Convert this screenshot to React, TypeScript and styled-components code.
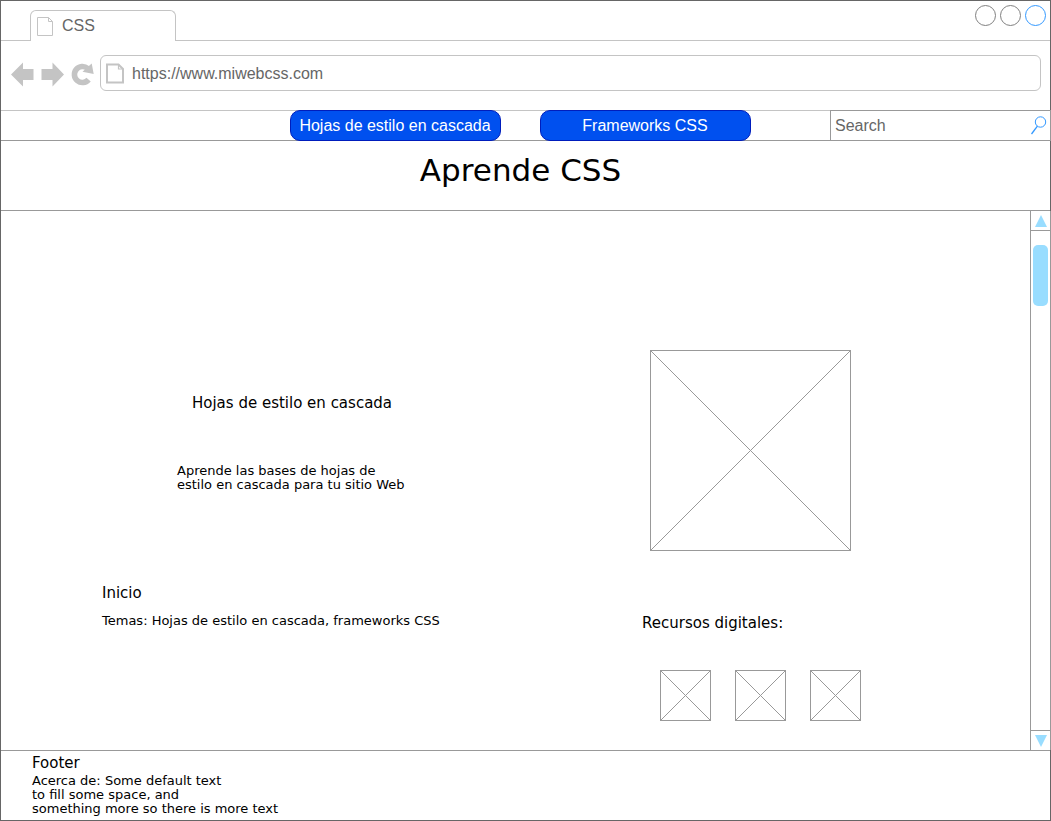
import React from "react";
import styled, { createGlobalStyle } from "styled-components";

const line = "#999";
const chromeLine = "#c4c4c4";
const sky = "#99ddff";
const blue = "#3399ff";

const GlobalStyle = createGlobalStyle`
  *, *::before, *::after { box-sizing: border-box; }
  body {
    margin: 0;
    background: #fff;
    color: #000;
    font-family: Verdana, "DejaVu Sans", sans-serif;
  }
  button, input { font: inherit; }
  h1, h2, p { margin: 0; font-weight: normal; }
  svg { display: block; flex: none; }
`;

const Window = styled.div`
  display: flex;
  flex-direction: column;
  min-height: 100vh;
  border: 1px solid #666;
`;

const Chrome = styled.div`
  font-family: Arial, "Liberation Sans", sans-serif;
  font-size: 16px;
  line-height: 20px;
  color: #666;
`;

const TabStrip = styled.div`
  display: flex;
  align-items: flex-end;
  justify-content: space-between;
  height: 40px;
  padding: 0 4px 0 29px;
  border-bottom: 1px solid ${chromeLine};
`;

const Tab = styled.div`
  display: flex;
  align-items: center;
  gap: 8px;
  width: 146px;
  height: 31px;
  margin-bottom: -1px;
  padding-left: 6px;
  border: 1px solid ${chromeLine};
  border-bottom: 0;
  border-radius: 6px 6px 0 0;
  background: #fff;
`;

const WindowControls = styled.div`
  display: flex;
  align-self: flex-start;
  gap: 4px;
  padding-top: 4px;
`;

const Dot = styled.button<{ $color: string }>`
  width: 21px;
  height: 21px;
  padding: 0;
  border: 1px solid ${(p) => p.$color};
  border-radius: 50%;
  background: #fff;
`;

const Toolbar = styled.div`
  display: flex;
  align-items: center;
  height: 69px;
  padding: 0 9px 5px;
  gap: 6px;
`;

const ToolButton = styled.button`
  padding: 0;
  border: 0;
  background: none;
`;

const ToolGroup = styled.div`
  display: flex;
  gap: 7px;
  padding: 2px 0 0 1px;
`;

const AddressBar = styled.label`
  display: flex;
  flex: 1;
  align-items: center;
  gap: 8px;
  height: 36px;
  padding: 1px 6px 0 5px;
  border: 1px solid ${chromeLine};
  border-radius: 6px;
`;

const TextInput = styled.input`
  flex: 1;
  min-width: 0;
  padding: 0;
  border: 0;
  outline: 0;
  background: none;
  color: #666;
  &::placeholder { color: #666; opacity: 1; }
`;

const NavBar = styled.div`
  display: flex;
  justify-content: space-between;
  height: 31px;
  border-top: 1px solid ${chromeLine};
  border-bottom: 1px solid ${line};
`;

const NavLinks = styled.nav`
  display: flex;
  gap: 39px;
  margin: -1px 0 -1px calc(50% - 236px);
`;

const NavButton = styled.button`
  width: 211px;
  padding: 0;
  border: 1px solid #001dbc;
  border-radius: 10px;
  background: #0050ef;
  color: #fff;
  white-space: nowrap;
`;

const SearchBox = styled.label`
  display: flex;
  align-items: center;
  width: 221px;
  margin: -1px -1px -1px 0;
  padding: 0 3px 0 4px;
  border: 1px solid ${line};
`;

const Header = styled.header`
  height: 70px;
  padding: 10px 10px 0 0;
  border-bottom: 1px solid ${line};
  text-align: center;
`;

const Title = styled.h1`
  font-size: 31px;
  line-height: 38px;
`;

const Body = styled.div`
  display: flex;
  flex: 1;
  border-bottom: 1px solid ${line};
`;

const Content = styled.main`
  display: grid;
  grid-template-columns: 1fr 388px;
  align-items: start;
  flex: 1;
`;

const Column = styled.div<{ $top: number; $left: number }>`
  padding: ${(p) => p.$top}px 0 16px ${(p) => p.$left}px;
`;

const Intro = styled.section`
  padding-left: 75px;
`;

const Heading = styled.h2<{ $indent?: number }>`
  padding-left: ${(p) => p.$indent ?? 0}px;
  font-size: 15px;
  line-height: 18px;
`;

const Text = styled.p<{ $gap: number }>`
  margin-top: ${(p) => p.$gap}px;
  font-size: 13px;
  line-height: 14px;
`;

const Topics = styled.section`
  margin-top: 92px;
`;

const Resources = styled.section`
  margin-top: 63px;
`;

const Thumbs = styled.div`
  display: flex;
  gap: 24px;
  margin-top: 38px;
  padding-left: 18px;
`;

const Hero = styled.div`
  padding-left: 8px;
`;

const ScrollTrack = styled.div`
  display: flex;
  flex-direction: column;
  width: 21px;
  margin-right: -1px;
  border: solid ${line};
  border-width: 0 1px;
`;

const ScrollButton = styled.button<{ $down?: boolean }>`
  display: grid;
  place-items: center;
  height: 20px;
  padding: 0;
  border: solid ${line};
  border-width: ${(p) => (p.$down ? "1px 0 0" : "0 0 1px")};
  background: none;
`;

const Track = styled.div`
  flex: 1;
  padding: 14px 2px;
`;

const Thumb = styled.div`
  height: 61px;
  border-radius: 5px;
  background: ${sky};
`;

const Footer = styled.footer`
  height: 69px;
  padding: 3px 0 0 31px;
`;

function PageIcon({ bold }: { bold?: boolean }) {
  return bold ? (
    <svg width="18" height="21" viewBox="0 0 18 21" fill="none" stroke={chromeLine} strokeWidth="2">
      <path d="M1 1.5H12.5L17 6V19.5H1Z" />
      <path d="M12.5 1.5V6H17" strokeWidth="1.2" />
    </svg>
  ) : (
    <svg width="17" height="20" viewBox="0 0 17 20" fill="none" stroke={chromeLine}>
      <path d="M.5 1.5H11.5L15.5 5.5V19.5H.5Z" />
      <path d="M11.5 1.5V5.5H15.5" />
    </svg>
  );
}

function ArrowIcon({ right }: { right?: boolean }) {
  return (
    <svg width="23" height="25" viewBox="0 0 23 25" fill={chromeLine}>
      <path d={right ? "M23 12.5L11.5 .5V7H.5V18H11.5V24.5Z" : "M0 12.5L12 .5V7H22.5V18H12V24.5Z"} />
    </svg>
  );
}

function ReloadIcon() {
  return (
    <svg width="23" height="25" viewBox="0 0 23 25">
      <path d="M17.6 17.6A8 8 0 1 1 16.6 6.4" fill="none" stroke={chromeLine} strokeWidth="5.6" />
      <path d="M20.7 1.5L22.7 12L11.5 9.8Z" fill={chromeLine} />
    </svg>
  );
}

function SearchIcon() {
  return (
    <svg width="17" height="19" viewBox="0 0 17 19" fill="none" stroke={blue}>
      <circle cx="10.5" cy="6" r="5.2" />
      <path d="M7.4 10.2L1.5 18" strokeWidth="1.3" />
    </svg>
  );
}

function Triangle({ down }: { down?: boolean }) {
  return (
    <svg width="12" height="12" viewBox="0 0 12 12" fill={sky}>
      <path d={down ? "M0 0H12L6 12Z" : "M6 0L12 12H0Z"} />
    </svg>
  );
}

function Placeholder({ size }: { size: number }) {
  const end = size - 0.5;
  return (
    <svg width={size} height={size} fill="none" stroke={line} role="img" aria-label="Imagen">
      <rect x=".5" y=".5" width={size - 1} height={size - 1} />
      <path d={`M.5 .5L${end} ${end}M${end} .5L.5 ${end}`} />
    </svg>
  );
}

export default function App() {
  return (
    <>
      <GlobalStyle />
      <Window>
        <Chrome>
          <TabStrip>
            <Tab>
              <PageIcon />
              CSS
            </Tab>
            <WindowControls>
              <Dot $color="#808080" aria-label="Minimizar" />
              <Dot $color="#808080" aria-label="Maximizar" />
              <Dot $color={blue} aria-label="Cerrar" />
            </WindowControls>
          </TabStrip>
          <Toolbar>
            <ToolGroup>
              <ToolButton aria-label="Anterior"><ArrowIcon /></ToolButton>
              <ToolButton aria-label="Siguiente"><ArrowIcon right /></ToolButton>
              <ToolButton aria-label="Recargar"><ReloadIcon /></ToolButton>
            </ToolGroup>
            <AddressBar>
              <PageIcon bold />
              <TextInput aria-label="Dirección" defaultValue="https://www.miwebcss.com" />
            </AddressBar>
          </Toolbar>
          <NavBar>
            <NavLinks>
              <NavButton>Hojas de estilo en cascada</NavButton>
              <NavButton>Frameworks CSS</NavButton>
            </NavLinks>
            <SearchBox>
              <TextInput aria-label="Buscar" placeholder="Search" />
              <SearchIcon />
            </SearchBox>
          </NavBar>
        </Chrome>
        <Header>
          <Title>Aprende CSS</Title>
        </Header>
        <Body>
          <Content>
            <Column $top={183} $left={101}>
              <Intro>
                <Heading $indent={15}>Hojas de estilo en cascada</Heading>
                <Text $gap={52}>
                  Aprende las bases de hojas de
                  <br />
                  estilo en cascada para tu sitio Web
                </Text>
              </Intro>
              <Topics>
                <Heading>Inicio</Heading>
                <Text $gap={12}>Temas: Hojas de estilo en cascada, frameworks CSS</Text>
              </Topics>
            </Column>
            <Column $top={139} $left={0}>
              <Hero>
                <Placeholder size={201} />
              </Hero>
              <Resources>
                <Heading>Recursos digitales:</Heading>
                <Thumbs>
                  <Placeholder size={51} />
                  <Placeholder size={51} />
                  <Placeholder size={51} />
                </Thumbs>
              </Resources>
            </Column>
          </Content>
          <ScrollTrack>
            <ScrollButton aria-label="Subir"><Triangle /></ScrollButton>
            <Track><Thumb /></Track>
            <ScrollButton $down aria-label="Bajar"><Triangle down /></ScrollButton>
          </ScrollTrack>
        </Body>
        <Footer>
          <Heading>Footer</Heading>
          <Text $gap={2}>
            Acerca de: Some default text
            <br />
            to fill some space, and
            <br />
            something more so there is more text
          </Text>
        </Footer>
      </Window>
    </>
  );
}
